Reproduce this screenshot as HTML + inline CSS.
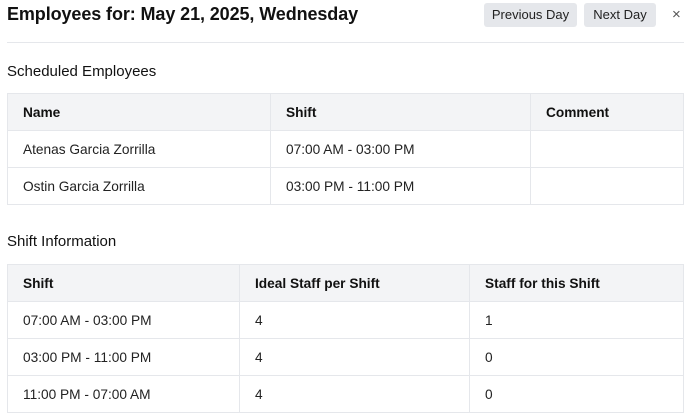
<!DOCTYPE html>
<html><head><style>
*{box-sizing:border-box;margin:0;padding:0}
body{width:700px;height:420px;background:#fff;font-family:"Liberation Sans",sans-serif;color:#111;position:relative;overflow:hidden}
.t{position:absolute;left:7px;top:4px;font-size:18px;font-weight:bold;letter-spacing:-0.1px}
.b{position:absolute;top:3px;height:24px;background:#e5e7eb;border-radius:3px;font-size:13px;line-height:24px;text-align:center;color:#222}
.x{position:absolute;left:672px;top:6px;font-size:15px;color:#555}
.hr{position:absolute;left:7px;top:42px;width:677px;height:1px;background:#e5e7eb}
h3{position:absolute;left:7px;font-size:15px;font-weight:normal;color:#111}
table{position:absolute;left:7px;width:677px;border-collapse:collapse;font-size:13.7px}
td,th{border:1px solid #e5e7eb;height:37px;padding:0 0 0 15px;text-align:left;color:#222}
th{background:#f3f4f6;font-weight:bold;color:#111}
</style></head><body>
<div class="t">Employees for: May 21, 2025, Wednesday</div>
<div class="b" style="left:484px;width:93px">Previous Day</div>
<div class="b" style="left:584px;width:72px">Next Day</div>
<div class="x">×</div>
<div class="hr"></div>
<h3 style="top:63px">Scheduled Employees</h3>
<table style="top:93px">
<tr><th style="width:263px">Name</th><th style="width:260px">Shift</th><th>Comment</th></tr>
<tr><td>Atenas Garcia Zorrilla</td><td>07:00 AM - 03:00 PM</td><td></td></tr>
<tr><td>Ostin Garcia Zorrilla</td><td>03:00 PM - 11:00 PM</td><td></td></tr>
</table>
<h3 style="top:233px">Shift Information</h3>
<table style="top:264px">
<tr><th style="width:232px">Shift</th><th style="width:230px">Ideal Staff per Shift</th><th>Staff for this Shift</th></tr>
<tr><td>07:00 AM - 03:00 PM</td><td>4</td><td>1</td></tr>
<tr><td>03:00 PM - 11:00 PM</td><td>4</td><td>0</td></tr>
<tr><td>11:00 PM - 07:00 AM</td><td>4</td><td>0</td></tr>
</table>
</body></html>
